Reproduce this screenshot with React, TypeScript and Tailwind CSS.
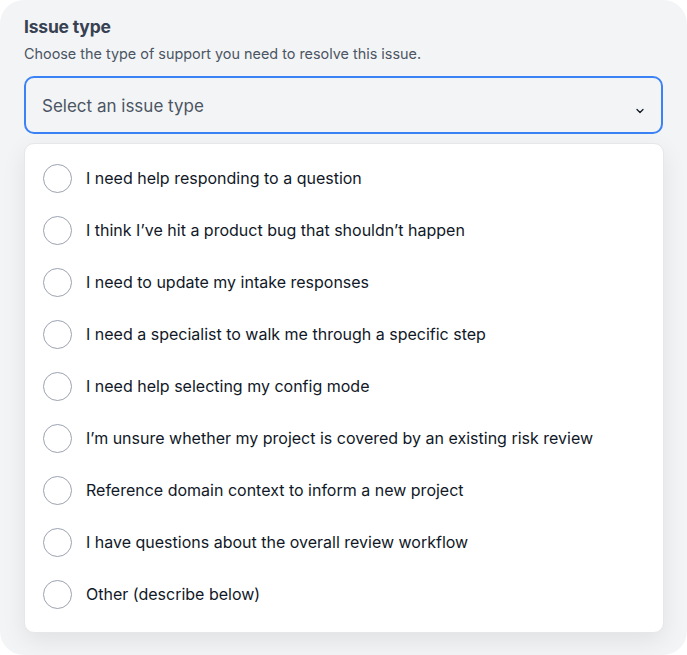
import { ChevronDown } from 'lucide-react';

const options = [
  'I need help responding to a question',
  'I think I\u2019ve hit a product bug that shouldn\u2019t happen',
  'I need to update my intake responses',
  'I need a specialist to walk me through a specific step',
  'I need help selecting my config mode',
  'I\u2019m unsure whether my project is covered by an existing risk review',
  'Reference domain context to inform a new project',
  'I have questions about the overall review workflow',
  'Other (describe below)',
];

export default function App() {
  return (
    <div className="w-[687px] h-[655px] bg-white font-['Inter',sans-serif]">
      <div className="h-full rounded-[24px] bg-[#f3f4f6] px-6 pt-[16px]">
        {/* Label */}
        <h2 className="text-[17.5px] leading-[22px] font-bold text-[#374151] tracking-[-0.2px]">Issue type</h2>
        <p className="mt-[7px] text-[14.4px] leading-[18px] text-[#4b5563]">
          Choose the type of support you need to resolve this issue.
        </p>

        {/* Select trigger */}
        <div className="mt-[13px] h-[58px] rounded-[10px] border-2 border-[#3b82f6] flex items-center justify-between pl-4 pr-[15px]">
          <span className="mt-[3px] text-[17px] text-[#4b5563]">Select an issue type</span>
          <ChevronDown className="w-[12px] h-[12px] text-[#111827] mt-[11px]" strokeWidth={2.5} />
        </div>

        {/* Options list */}
        <div className="mt-[9px] w-[640px] rounded-[10px] bg-white border border-[#e5e7eb] shadow-[0_8px_24px_rgba(0,0,0,0.08)] pt-[8px] pb-[12px]">
          {options.map(opt => (
            <div key={opt} className="h-[52px] flex items-center gap-[14px] pl-[18px]">
              <div className="w-[29px] h-[29px] rounded-full border-[1.5px] border-[#9ca3af] shrink-0" />
              <span className="text-[16px] text-[#111827]">{opt}</span>
            </div>
          ))}
        </div>
      </div>
    </div>
  );
}
